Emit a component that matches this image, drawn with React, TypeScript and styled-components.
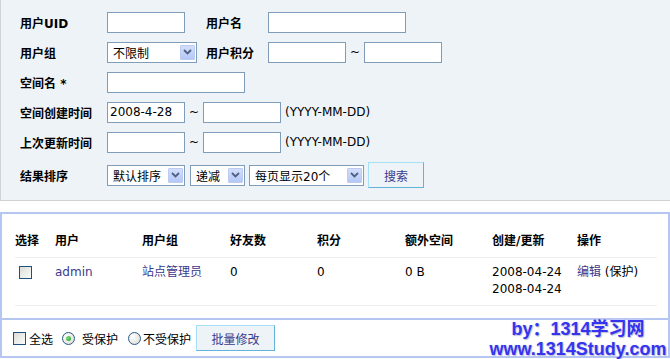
import styled, { createGlobalStyle } from "styled-components";

const GlobalStyle = createGlobalStyle`
  body {
    margin: 0;
    background: #fff;
    color: #000;
    font-family: "DejaVu Sans", "Noto Sans CJK SC", sans-serif;
    font-size: 12px;
  }
`;

const Page = styled.div`
  position: relative;
  width: 670px;
  height: 359px;
  overflow: hidden;
`;

const SearchPanel = styled.div`
  height: 201px;
  box-sizing: border-box;
  padding: 7px 0 0 19px;
  background: #eef3f7;
  border-left: 1px solid #cfd3d6;
  border-bottom: 1px solid #cfd3d6;
`;

const FormRow = styled.div<{ $tall?: boolean }>`
  display: flex;
  align-items: center;
  height: ${(p) => (p.$tall ? "36px" : "30px")};
`;

const Label = styled.div<{ $w: number }>`
  width: ${(p) => p.$w}px;
  flex-shrink: 0;
  font-weight: bold;
  white-space: nowrap;
`;

const Cell = styled.div<{ $w: number }>`
  width: ${(p) => p.$w}px;
  flex-shrink: 0;
  display: flex;
  align-items: center;
`;

const TextInput = styled.input<{ $w: number }>`
  width: ${(p) => p.$w}px;
  height: 21px;
  box-sizing: border-box;
  margin: 0;
  padding: 0 2px;
  border: 1px solid #7f9db9;
  background: #fff;
  font: inherit;
  color: #000;
  outline: none;
`;

const Tilde = styled.span`
  width: 18px;
  text-align: center;
  flex-shrink: 0;
`;

const Hint = styled.span`
  margin-left: 4px;
  white-space: nowrap;
`;

const SelectBox = styled.div<{ $w: number; $gap?: number }>`
  width: ${(p) => p.$w}px;
  height: 21px;
  box-sizing: border-box;
  margin-left: ${(p) => p.$gap ?? 0}px;
  display: flex;
  align-items: center;
  justify-content: space-between;
  padding-left: 5px;
  padding-right: 1px;
  border: 1px solid #7f9db9;
  background: #fff;
  white-space: nowrap;
  flex-shrink: 0;
`;

const Arrow = styled.span`
  width: 15px;
  height: 15px;
  box-sizing: border-box;
  display: flex;
  align-items: center;
  justify-content: center;
  border: 1px solid #bccbf3;
  border-radius: 1px;
  background: linear-gradient(#d3def9, #b4c7f6);
`;

const Button = styled.button<{ $w: number; $gap?: number }>`
  width: ${(p) => p.$w}px;
  height: 26px;
  margin: 0 0 0 ${(p) => p.$gap ?? 0}px;
  padding: 0;
  border: 1px solid;
  border-color: #a6e0f6 #62b2d9 #62b2d9 #a6e0f6;
  background: #eef3f7;
  color: #3a3a8c;
  font: inherit;
  flex-shrink: 0;
`;

const ResultBox = styled.div`
  margin-top: 11px;
  border: 2px solid #b6c6f2;
`;

const TableArea = styled.div`
  padding: 12px 11px 12px 13px;
`;

const GridRow = styled.div<{ $head?: boolean }>`
  display: grid;
  grid-template-columns: 40px 87px 88px 87px 88px 87px 85px 1fr;
  align-items: ${(p) => (p.$head ? "center" : "start")};
  height: ${(p) => (p.$head ? "31px" : "auto")};
  padding: ${(p) => (p.$head ? "0" : "6px 0 7px")};
  line-height: 17px;
  font-weight: ${(p) => (p.$head ? "bold" : "normal")};
  border-bottom: 1px solid #eceef0;
  white-space: nowrap;
`;

const Link = styled.a`
  color: #3a3a8c;
  text-decoration: none;
`;

const CheckBox = styled.span<{ $gap?: number; $top?: number }>`
  display: inline-block;
  width: 13px;
  height: 13px;
  box-sizing: border-box;
  margin-left: ${(p) => p.$gap ?? 0}px;
  margin-top: ${(p) => p.$top ?? 0}px;
  border: 1px solid #1c5180;
  background: linear-gradient(135deg, #dcdcd6, #fbfbfa);
  flex-shrink: 0;
`;

const Radio = styled.span<{ $on?: boolean; $gap: number }>`
  width: 13px;
  height: 13px;
  box-sizing: border-box;
  margin-left: ${(p) => p.$gap}px;
  border-radius: 50%;
  border: 1px solid #2a5a8a;
  background: radial-gradient(circle at 35% 35%, #ffffff, #d8d8d2);
  display: flex;
  align-items: center;
  justify-content: center;
  flex-shrink: 0;
  &::after {
    content: "";
    display: ${(p) => (p.$on ? "block" : "none")};
    width: 5px;
    height: 5px;
    border-radius: 50%;
    background: radial-gradient(circle at 35% 35%, #7de07d, #1d9a1d);
  }
`;

const Footer = styled.div`
  height: 36px;
  display: flex;
  align-items: center;
  padding-left: 11px;
  border-top: 2px solid #b6c6f2;
`;

const FooterText = styled.span<{ $gap: number }>`
  margin-left: ${(p) => p.$gap}px;
  white-space: nowrap;
`;

const Watermark = styled.div`
  position: absolute;
  left: 488px;
  bottom: 0;
  width: 180px;
  text-align: center;
  font-family: "Liberation Sans", "Noto Sans CJK SC", sans-serif;
  font-size: 18px;
  font-weight: bold;
  line-height: 20px;
  color: #3434ee;
  text-shadow: 0 0 2px #d8d8ee, 1px 1px 1px #b8b8d0;
  white-space: nowrap;
`;

function ChevronDown() {
  return (
    <svg width="9" height="6" viewBox="0 0 9 6">
      <path d="M1 1 L4.5 4.5 L8 1" fill="none" stroke="#4d6185" strokeWidth="1.8" />
    </svg>
  );
}

function Select({ text, w, gap }: { text: string; w: number; gap?: number }) {
  return (
    <SelectBox $w={w} $gap={gap}>
      <span>{text}</span>
      <Arrow>
        <ChevronDown />
      </Arrow>
    </SelectBox>
  );
}

const columns = ["选择", "用户", "用户组", "好友数", "积分", "额外空间", "创建/更新", "操作"];

export default function App() {
  return (
    <Page>
      <GlobalStyle />
      <SearchPanel>
        <FormRow>
          <Label $w={87}>用户UID</Label>
          <Cell $w={99}>
            <TextInput $w={78} />
          </Cell>
          <Label $w={62}>用户名</Label>
          <TextInput $w={138} />
        </FormRow>
        <FormRow>
          <Label $w={87}>用户组</Label>
          <Cell $w={99}>
            <Select text="不限制" w={90} />
          </Cell>
          <Label $w={62}>用户积分</Label>
          <TextInput $w={78} />
          <Tilde>~</Tilde>
          <TextInput $w={78} />
        </FormRow>
        <FormRow>
          <Label $w={87}>空间名 *</Label>
          <TextInput $w={138} />
        </FormRow>
        <FormRow>
          <Label $w={87}>空间创建时间</Label>
          <TextInput $w={78} defaultValue="2008-4-28" />
          <Tilde>~</Tilde>
          <TextInput $w={78} />
          <Hint>(YYYY-MM-DD)</Hint>
        </FormRow>
        <FormRow>
          <Label $w={87}>上次更新时间</Label>
          <TextInput $w={78} />
          <Tilde>~</Tilde>
          <TextInput $w={78} />
          <Hint>(YYYY-MM-DD)</Hint>
        </FormRow>
        <FormRow $tall>
          <Label $w={87}>结果排序</Label>
          <Select text="默认排序" w={78} />
          <Select text="递减" w={55} gap={5} />
          <Select text="每页显示20个" w={115} gap={4} />
          <Button $w={56} $gap={4}>搜索</Button>
        </FormRow>
      </SearchPanel>

      <ResultBox>
        <TableArea>
          <GridRow $head>
            {columns.map((c) => (
              <span key={c}>{c}</span>
            ))}
          </GridRow>
          <GridRow>
            <span>
              <CheckBox $gap={4} $top={2} />
            </span>
            <Link>admin</Link>
            <Link>站点管理员</Link>
            <span>0</span>
            <span>0</span>
            <span>0 B</span>
            <span>
              2008-04-24
              <br />
              2008-04-24
            </span>
            <span>
              <Link>编辑</Link> (保护)
            </span>
          </GridRow>
        </TableArea>
        <Footer>
          <CheckBox />
          <FooterText $gap={3}>全选</FooterText>
          <Radio $on $gap={9} />
          <FooterText $gap={7}>受保护</FooterText>
          <Radio $gap={10} />
          <FooterText $gap={2}>不受保护</FooterText>
          <Button $w={79} $gap={5}>批量修改</Button>
        </Footer>
      </ResultBox>

      <Watermark>
        by：1314学习网
        <br />
        www.1314Study.com
      </Watermark>
    </Page>
  );
}
